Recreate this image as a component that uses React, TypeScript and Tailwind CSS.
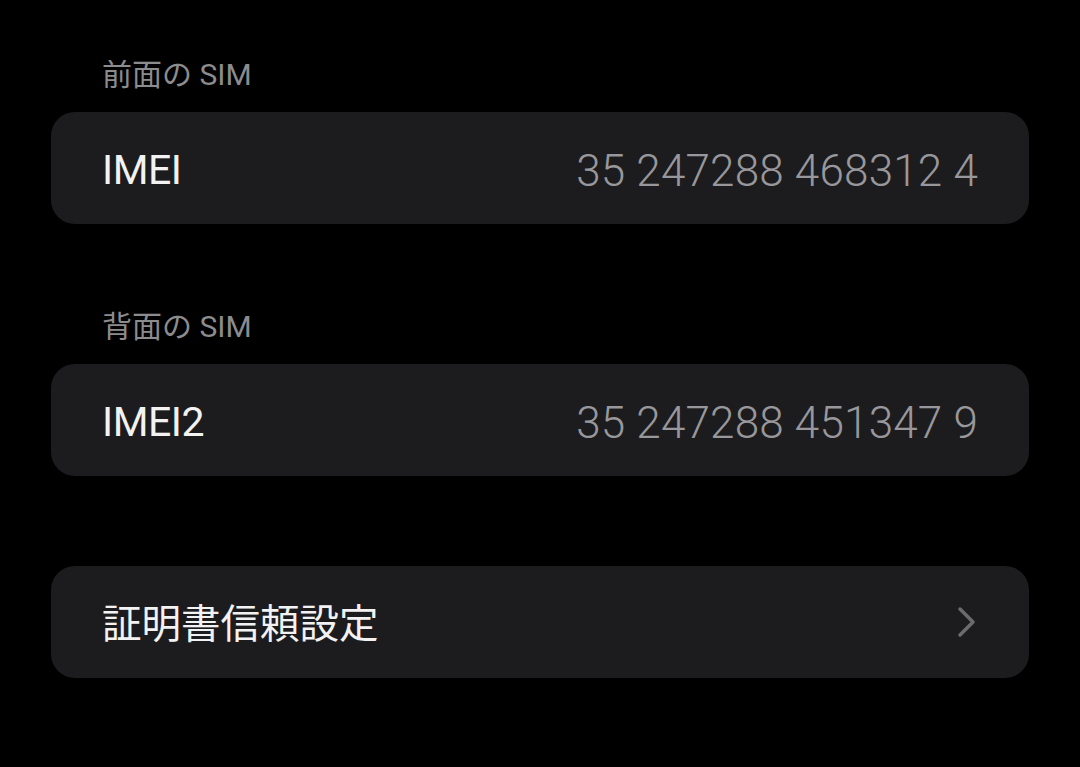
import React from "react";

const font = { fontFamily: '"Roboto", "Noto Sans CJK JP", sans-serif' };

function Label({ text }: { text: string }) {
  return (
    <div className="pl-[51px] h-[40px] leading-[40px] text-[30px] text-[#8c8c8e] mb-[17px]">
      {text}
    </div>
  );
}

function Row({ title, value, small }: { title: string; value?: string; small?: boolean }) {
  return (
    <div className="h-[112px] rounded-[24px] bg-[#1c1c1e] flex items-center justify-between pl-[51px] pr-[51px] pt-[6px]">
      <span className={small ? "text-[39.5px] text-[#f2f2f2]" : "text-[41px] text-[#f2f2f2] tracking-[-0.5px]"}>
        {title}
      </span>
      {value ? (
        <span className="text-[44px] font-light text-[#98989c] tracking-[0.2px]">{value}</span>
      ) : (
        <svg width="22" height="34" viewBox="0 0 22 34" className="-mt-[6px]">
          <path
            d="M4 4 L17 17 L4 30"
            fill="none"
            stroke="#6b6b6e"
            strokeWidth="3.5"
            strokeLinecap="round"
            strokeLinejoin="round"
          />
        </svg>
      )}
    </div>
  );
}

export default function App() {
  return (
    <div className="w-[1080px] h-[767px] bg-black px-[51px] pt-[55px]" style={font}>
      <Label text="前面の SIM" />
      <Row title="IMEI" value="35 247288 468312 4" />
      <div className="h-[83px]" />
      <Label text="背面の SIM" />
      <Row title="IMEI2" value="35 247288 451347 9" />
      <div className="h-[90px]" />
      <Row title="証明書信頼設定" small />
    </div>
  );
}
